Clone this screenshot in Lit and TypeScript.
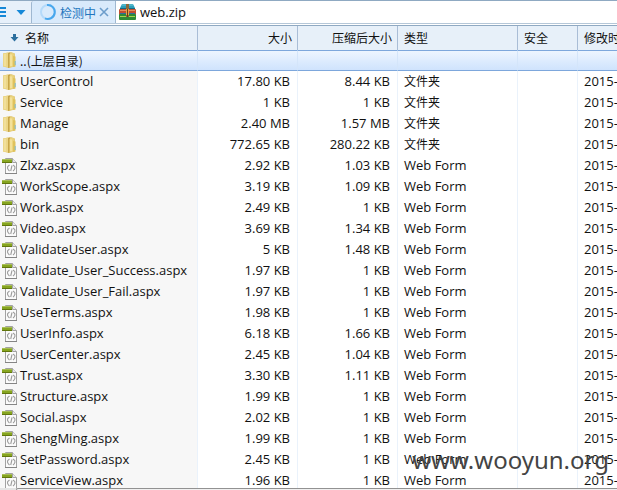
import { LitElement, html, css, svg } from "lit";
import { customElement, state } from "lit/decorators.js";

interface Entry {
  name: string;
  size: string;
  packed: string;
  folder?: boolean;
}

const entries: Entry[] = [
  { name: "UserControl", size: "17.80 KB", packed: "8.44 KB", folder: true },
  { name: "Service", size: "1 KB", packed: "1 KB", folder: true },
  { name: "Manage", size: "2.40 MB", packed: "1.57 MB", folder: true },
  { name: "bin", size: "772.65 KB", packed: "280.22 KB", folder: true },
  { name: "Zlxz.aspx", size: "2.92 KB", packed: "1.03 KB" },
  { name: "WorkScope.aspx", size: "3.19 KB", packed: "1.09 KB" },
  { name: "Work.aspx", size: "2.49 KB", packed: "1 KB" },
  { name: "Video.aspx", size: "3.69 KB", packed: "1.34 KB" },
  { name: "ValidateUser.aspx", size: "5 KB", packed: "1.48 KB" },
  { name: "Validate_User_Success.aspx", size: "1.97 KB", packed: "1 KB" },
  { name: "Validate_User_Fail.aspx", size: "1.97 KB", packed: "1 KB" },
  { name: "UseTerms.aspx", size: "1.98 KB", packed: "1 KB" },
  { name: "UserInfo.aspx", size: "6.18 KB", packed: "1.66 KB" },
  { name: "UserCenter.aspx", size: "2.45 KB", packed: "1.04 KB" },
  { name: "Trust.aspx", size: "3.30 KB", packed: "1.11 KB" },
  { name: "Structure.aspx", size: "1.99 KB", packed: "1 KB" },
  { name: "Social.aspx", size: "2.02 KB", packed: "1 KB" },
  { name: "ShengMing.aspx", size: "1.99 KB", packed: "1 KB" },
  { name: "SetPassword.aspx", size: "2.45 KB", packed: "1 KB" },
  { name: "ServiceView.aspx", size: "1.96 KB", packed: "1 KB" },
];

const folderIcon = html`<svg width="18" height="18" viewBox="0 0 18 18" aria-hidden="true">
  ${svg`<path d="M3 2.500 11 1l4 1.500v13L9 17l-6-1.500z" fill="#e2cb7c"/>
  <path d="M3 2.500 8 1.500V16.500l-5-1z" fill="#ecd687"/>
  <path d="M5 3v12" stroke="#f5e8ae" stroke-width="1"/>
  <path d="M8 2l2-.5v15L8 17z" fill="#c7a548"/>
  <path d="M9.500 3l4-1v12.500l-4 2.500z" fill="#ecd47c"/>
  <path d="M11 3.500v11.500" stroke="#f8eab0" stroke-width="1.200"/>
  <path d="M13 5l2.500.5v10l-2.500.5z" fill="#dfc25c"/>
  <path d="M15.200 10v4" stroke="#7dbbd2" stroke-width="1"/>`}
</svg>`;

const fileIcon = html`<svg width="18" height="18" viewBox="0 0 18 18" aria-hidden="true">
  ${svg`<path d="M5.500 1.500h7l4 4v11h-11z" fill="#fbfbfb" stroke="#a2a2a2"/>
  <path d="M12.500 1.500v4h4" fill="#e8e8e8" stroke="#a2a2a2"/>
  <path d="M5 16.500h12" stroke="#858585"/>
  <path d="M2 2h10v4H2z" fill="#86a520"/>
  <path d="M2 2h10v1H2z" fill="#a9bf56"/>
  <path d="M2 5h10v1H2z" fill="#61760d"/>
  <path d="M9.500 8Q7 9.500 7.500 11.200T9.500 14M13 8q2.500 1.500 2 3.200T13 14M12 8.500l-1.300 5.500" fill="none" stroke="#9b9b9b" stroke-width="1.100"/>`}
</svg>`;

@customElement("app-root")
export class AppRoot extends LitElement {
  @state() private scanning = true;

  static styles = css`
    :host {
      display: flex;
      flex-direction: column;
      height: 100vh;
      position: relative;
      overflow: hidden;
      background: #fff;
      color: #111;
      font: 13px/19px "Open Sans", "Noto Sans CJK SC", sans-serif;
    }
    button {
      border: 0;
      padding: 0;
      background: none;
      font: inherit;
      color: inherit;
      display: flex;
      align-items: center;
    }
    svg {
      display: block;
      flex: none;
    }
    .cjk {
      font-size: 12px;
      font-family: "Noto Sans CJK SC", sans-serif;
    }
    .tabs {
      display: flex;
      flex: none;
      height: 24px;
      box-sizing: border-box;
      border-top: 1px solid #8fa9c2;
      border-bottom: 1px solid #b5c7d8;
      background: #fff;
    }
    .tools {
      display: flex;
      width: 31px;
      background: #e7f0fa;
    }
    .menu {
      width: 15px;
    }
    .tab {
      display: flex;
      align-items: center;
      box-sizing: border-box;
      width: 85px;
      padding-left: 7px;
      gap: 3px;
      border: solid #9fb8d1;
      border-width: 0 1px;
      border-top-left-radius: 2px;
      background: #d9eafb;
      color: #2275bd;
    }
    .file {
      display: flex;
      align-items: center;
      gap: 4px;
      padding-left: 3px;
    }
    .list {
      flex: 1;
      min-height: 0;
      margin-top: 1px;
      overflow: hidden;
      border-top: 1px solid #8fa9c2;
    }
    table {
      width: 100%;
      table-layout: fixed;
      border-collapse: separate;
      border-spacing: 0;
    }
    .c-name { width: 198px; }
    .c-num { width: 100px; }
    .c-type { width: 120px; }
    .c-safe { width: 60px; }
    th,
    td {
      box-sizing: border-box;
      height: 21px;
      padding: 0 6px;
      border-right: 1px solid #eaf2fb;
      text-align: left;
      font-weight: 400;
      white-space: nowrap;
      overflow: hidden;
    }
    th,
    td.cjk {
      padding-bottom: 2px;
    }
    th {
      height: 24px;
      background: #e7f0f9;
      border-right-color: #a9bdd6;
    }
    th:last-child,
    td:last-child {
      padding-right: 0;
      border-right: 0;
    }
    .num {
      text-align: right;
      padding-right: 7px;
    }
    th.num {
      padding-right: 5px;
    }
    td:first-child {
      padding: 0;
      background: #f7f7f7;
    }
    th:first-child {
      padding-left: 10px;
    }
    .cell {
      display: flex;
      align-items: center;
      gap: 2px;
    }
    th .cell {
      gap: 6px;
    }
    .selected td,
    .selected td:first-child {
      padding-bottom: 1px;
      line-height: 17px;
      border-top: 1px solid #7da7dc;
      border-bottom: 1px solid #7da7dc;
      border-right-color: #d4e5fa;
      background: linear-gradient(#edf5ff, #cfe3fd);
    }
    .edge {
      flex: none;
      height: 2px;
      display: flex;
      background: #e4e4e4;
    }
    .edge-line {
      flex: 1;
      margin-left: 16px;
      border-top: 1px solid #929292;
      border-left: 1px solid #929292;
      border-top-left-radius: 2px;
      background: #f0f0f0;
    }
    .watermark {
      position: absolute;
      right: 8px;
      bottom: 14px;
      font: 24px/32px "Noto Sans", sans-serif;
      color: #444;
      pointer-events: none;
    }
  `;

  private tab() {
    return html`<div class="tab">
      <svg width="18" height="18" viewBox="0 0 18 18" aria-hidden="true">
        <circle cx="9" cy="9" r="7" fill="none" stroke="#b5dafa" stroke-width="2"></circle>
        <path d="M8 2a7 7 0 1 1-2 13.400" fill="none" stroke="#48a7ed" stroke-width="2"></path>
      </svg>
      <span class="cjk">检测中</span>
      <button aria-label="关闭" @click=${() => (this.scanning = false)}>
        <svg width="10" height="10" viewBox="0 0 10 10">
          <path d="M1 1l8 8M9 1L1 9" stroke="#6c9dcb" stroke-width="1.600"></path>
        </svg>
      </button>
    </div>`;
  }

  render() {
    return html`
      <nav class="tabs">
        <div class="tools">
          <button class="menu" aria-label="菜单">
            <svg width="6" height="12" viewBox="0 0 6 12">
              <path d="M0 2h6M0 6h6M0 10h6" stroke="#1688d8" stroke-width="2"></path>
            </svg>
          </button>
          <button aria-label="更多">
            <svg width="12" height="12" viewBox="0 0 12 12">
              <path d="M1.500 4h9L6 9z" fill="#1688d8"></path>
            </svg>
          </button>
        </div>
        ${this.scanning ? this.tab() : ""}
        <div class="file">
          <svg width="17" height="16" viewBox="0 0 17 16" aria-hidden="true">
            <path d="M3 0h11l2 4H1z" fill="#2c9fba"></path>
            <path d="M3 1h11" stroke="#71cad9"></path>
            <rect x="1" y="4" width="15" height="1" fill="#146a84"></rect>
            <rect y="5" width="17" height="6" rx="1" fill="#c04e30"></rect>
            <path d="M1 6.500h15" stroke="#e58b5f"></path>
            <path d="M1 9.500h15" stroke="#2b6f9e"></path>
            <rect y="10" width="17" height="6" rx="1" fill="#2c8a34"></rect>
            <path d="M1 12.500h15" stroke="#a5d550"></path>
            <rect x="7" width="3" height="13" fill="#8a6a3c"></rect>
            <rect x="7" y="5" width="3" height="6" fill="#e0a648"></rect>
            <rect x="8" y="5" width="1" height="8" fill="#6d3d19"></rect>
          </svg>
          <span>web.zip</span>
        </div>
      </nav>
      <main class="list">
        <table>
          <colgroup>
            <col class="c-name" /><col class="c-num" /><col class="c-num" />
            <col class="c-type" /><col class="c-safe" /><col />
          </colgroup>
          <thead>
            <tr class="cjk">
              <th>
                <div class="cell">
                  <svg width="9" height="9" viewBox="0 0 9 9" aria-hidden="true">
                    <path d="M3 1h3v3h2.500L4.500 8.500.5 4H3z" fill="#2b6f9e"></path>
                  </svg>
                  名称
                </div>
              </th>
              <th class="num">大小</th>
              <th class="num">压缩后大小</th>
              <th>类型</th>
              <th>安全</th>
              <th>修改时间</th>
            </tr>
          </thead>
          <tbody>
            <tr class="selected">
              <td><div class="cell">${folderIcon}<span class="cjk">..(上层目录)</span></div></td>
              <td></td><td></td><td></td><td></td><td></td>
            </tr>
            ${entries.map(
              (e) => html`<tr>
                <td><div class="cell">${e.folder ? folderIcon : fileIcon}<span>${e.name}</span></div></td>
                <td class="num">${e.size}</td>
                <td class="num">${e.packed}</td>
                <td class=${e.folder ? "cjk" : ""}>${e.folder ? "文件夹" : "Web Form"}</td>
                <td></td>
                <td>2015-</td>
              </tr>`
            )}
          </tbody>
        </table>
      </main>
      <div class="edge"><div class="edge-line"></div></div>
      <div class="watermark">www.wooyun.org</div>
    `;
  }
}
